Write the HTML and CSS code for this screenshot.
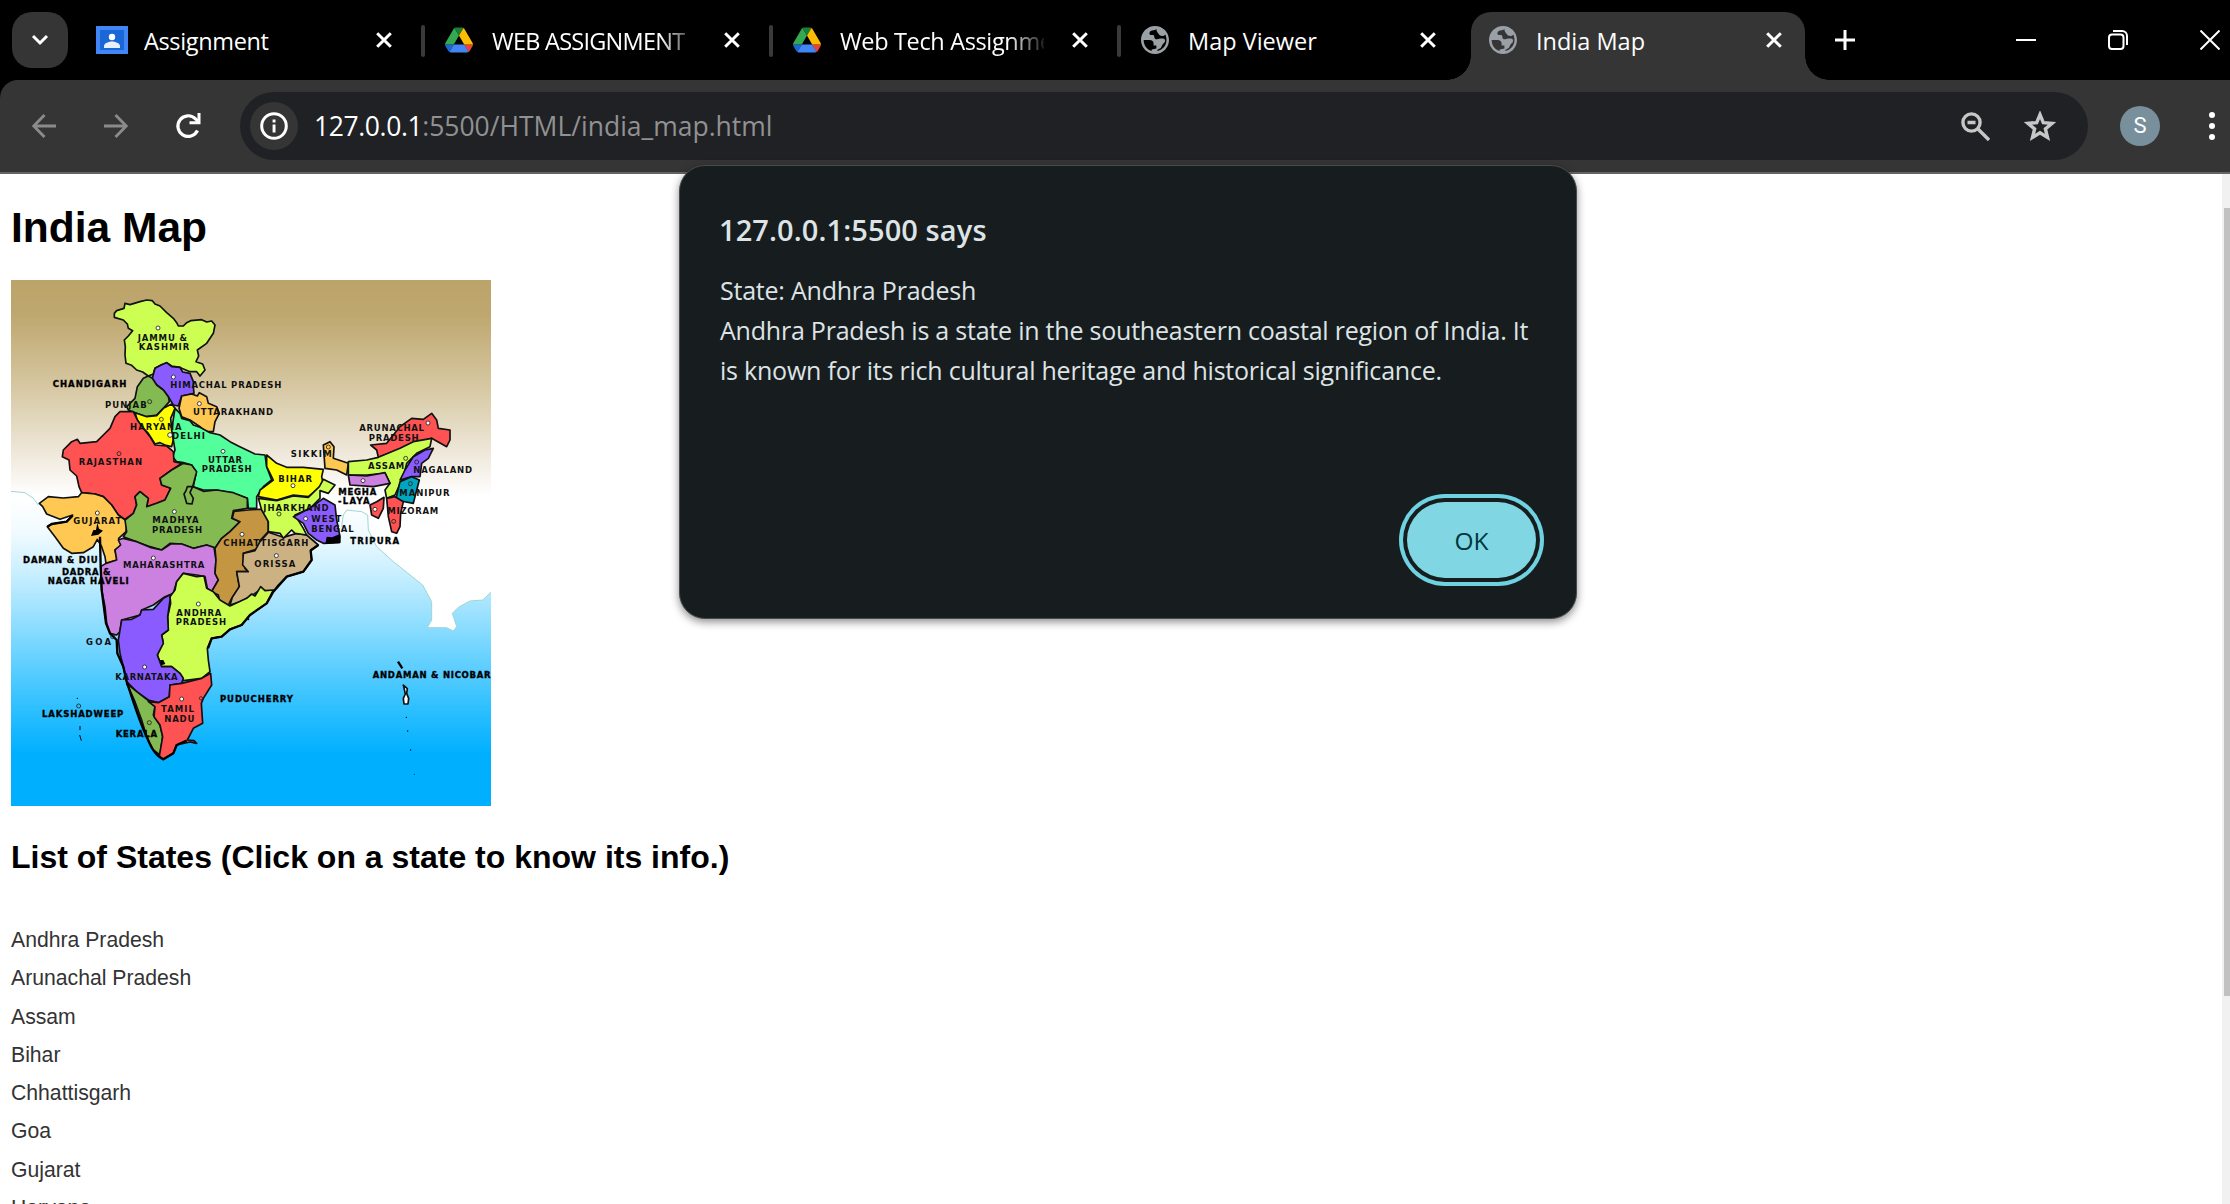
FILE: index.html
```html
<!DOCTYPE html>
<html lang="en">
<head>
<meta charset="utf-8">
<title>India Map</title>
<link rel="stylesheet" href="styles.css">
</head>
<body>
<svg class="defs" width="0" height="0" aria-hidden="true">
  <symbol id="x" viewBox="0 0 16 16"><path d="M1.2 1.2 14.8 14.8M14.8 1.2 1.2 14.8" stroke="currentColor" stroke-width="3" fill="none"/></symbol>
  <symbol id="drive" viewBox="0 0 87.3 78">
    <path fill="#1967d2" d="m6.6 66.85 3.85 6.65c.8 1.4 1.95 2.5 3.3 3.3l13.75-23.8H0c0 1.55.4 3.1 1.2 4.5z"/>
    <path fill="#34a853" d="M43.65 25 29.9 1.2c-1.35.8-2.5 1.9-3.3 3.3L1.2 48.5A9 9 0 0 0 0 53h27.5z"/>
    <path fill="#ea4335" d="M73.55 76.8c1.35-.8 2.5-1.9 3.3-3.3l1.6-2.75L86.1 57.500c.8-1.4 1.200-2.950 1.200-4.500H59.800l5.850 11.500z"/>
    <path fill="#188038" d="M43.65 25 57.400 1.200C56.050.4 54.500 0 52.900 0H34.400c-1.600 0-3.150.450-4.500 1.200z"/>
    <path fill="#4285f4" d="M59.800 53H27.500L13.750 76.800c1.350.8 2.900 1.200 4.500 1.200h50.800c1.600 0 3.150-.450 4.500-1.200z"/>
    <path fill="#fbbc04" d="M73.400 26.500 60.700 4.500c-.8-1.400-1.950-2.500-3.300-3.300L43.650 25l16.150 28h27.450c0-1.550-.4-3.100-1.200-4.500z"/>
  </symbol>
  <symbol id="globe" viewBox="2 2 20 20"><path fill="#9aa0a6" d="M12 2C6.480 2 2 6.480 2 12s4.480 10 10 10 10-4.480 10-10S17.520 2 12 2zM3.900 12h4.200c1.900 0 2.900 1 2.900 2.600v1.400h2v2.100l-3.400.6v1.100C6.200 19 3.900 15.800 3.900 12zm9.600 7.900c0-.9.900-1.500 2-1.900 1-.4 1.200-1.500 1.700-2.500.7-1.200 2-1.400 2-3.100 0-1.300-1.200-1.400-2.200-1.400-1.600 0-2.500.5-3.500.5-1.200 0-2-.7-2-1.700 0-1.500-1-1.300-2-1.300-.9 0-1.500-.4-1.500-1.300C8 5.800 9.500 5 11 5c1 0 2-.4 2-1.200-.2 2 .8 2.700 1.500 3.700.6 1 1.500 1.600 2.600 1.600 1.200 0 2-.6 2.300-1.100.5 1.100.8 2.600.8 4 0 3.900-2.800 7.200-6.700 7.900z"/></symbol>
</svg>

<header class="tabstrip">
  <button class="tab-search"><svg width="18" height="12" viewBox="0 0 18 12"><path d="M2 2l7 7 7-7" fill="none" stroke="#fff" stroke-width="3"/></svg></button>
  <div class="tab">
    <svg class="fav room" viewBox="0 0 32 28"><path fill="#4285f4" d="M0 0h32v28H0z"/><path fill="#1a67d8" d="M4 4h24v20H4z"/><circle cx="16" cy="11" r="3.200" fill="#fff"/><path fill="#e8f0fe" d="M8 22v-2c0-3 5-4.500 8-4.500s8 1.500 8 4.500v2z"/></svg>
    <span class="tab-title tight">Assignment</span><svg class="close"><use href="#x"/></svg>
  </div>
  <div class="tab sep">
    <svg class="fav"><use href="#drive"/></svg>
    <span class="tab-title fade caps">WEB ASSIGNMENT</span><svg class="close"><use href="#x"/></svg>
  </div>
  <div class="tab sep">
    <svg class="fav"><use href="#drive"/></svg>
    <span class="tab-title fade tight">Web Tech Assignment</span><svg class="close"><use href="#x"/></svg>
  </div>
  <div class="tab sep">
    <svg class="fav"><use href="#globe"/></svg>
    <span class="tab-title">Map Viewer</span><svg class="close"><use href="#x"/></svg>
  </div>
  <div class="tab active">
    <svg class="fav"><use href="#globe"/></svg>
    <span class="tab-title">India Map</span><svg class="close"><use href="#x"/></svg>
  </div>
  <svg class="plus" width="20" height="20" viewBox="0 0 20 20"><path d="M10 0v20M0 10h20" stroke="#fff" stroke-width="3"/></svg>
  <div class="window-buttons">
    <svg width="20" height="20" viewBox="0 0 20 20"><path d="M0 10h20" stroke="#fff" stroke-width="2"/></svg>
    <svg width="20" height="20" viewBox="0 0 20 20" fill="none" stroke="#fff" stroke-width="2"><rect x="1" y="4.500" width="14.500" height="14.500" rx="3"/><path d="M5 1h9a5 5 0 0 1 5 5v9"/></svg>
    <svg width="20" height="20" viewBox="0 0 20 20"><path d="M.5.5l19 19M19.500.5l-19 19" stroke="#fff" stroke-width="2"/></svg>
  </div>
</header>

<nav class="toolbar">
  <svg class="nav" viewBox="0 0 24 24" fill="none" stroke="#8b8b8b" stroke-width="2.800"><path d="M24 12H2M12.500 1 1.800 12l10.700 11"/></svg>
  <svg class="nav" viewBox="0 0 24 24" fill="none" stroke="#8b8b8b" stroke-width="2.800"><path d="M0 12h22M11.500 1l10.700 11-10.700 11"/></svg>
  <svg class="nav reload" viewBox="0 0 26 26"><path d="M22.500 17.500A10.300 10.300 0 1 1 20.500 5.800l3 3" fill="none" stroke="#fff" stroke-width="3.200"/><path d="M25.500 0v11.200H14.500V8.200h8V0z" fill="#fff"/></svg>
  <div class="omnibox">
    <span class="info"><svg width="28" height="28" viewBox="0 0 28 28"><circle cx="14" cy="14" r="12.300" fill="none" stroke="#fff" stroke-width="3"/><path d="M12.600 12.500h2.900v8h-2.900zM12.600 7.500h2.900v3h-2.900z" fill="#fff"/></svg></span>
    <span class="url"><b>127.0.0.1</b>:5500/HTML/india_map.html</span>
    <svg class="lens" width="29" height="29" viewBox="0 0 29 29" fill="none" stroke="#c7c7c7" stroke-width="3.400"><circle cx="10.500" cy="10.500" r="8.600"/><path d="M17 17l11 11M6.500 10.500h8"/></svg>
    <svg class="star" width="32" height="31" viewBox="0 0 32 31"><path d="M16 3.600l3.300 8 8.800.7-6.700 5.600 2.100 8.500-7.500-4.600-7.500 4.600 2.100-8.500-6.700-5.600 8.800-.7z" fill="none" stroke="#c7c7c7" stroke-width="3.400"/></svg>
  </div>
  <span class="avatar">S</span>
  <svg class="dots" width="8" height="28" viewBox="0 0 8 28" fill="#fff"><circle cx="4" cy="3" r="3"/><circle cx="4" cy="14" r="3"/><circle cx="4" cy="25" r="3"/></svg>
</nav>

<div class="viewport">
<main class="page">
  <h1>India Map</h1>
  <svg class="map" viewBox="33 30 1440 1578" preserveAspectRatio="none">
    <defs><linearGradient id="sky" x1="0" y1="0" x2="0" y2="1">
      <stop offset="0" stop-color="#bba369"/><stop offset=".07" stop-color="#bfa870"/><stop offset=".2" stop-color="#d6c7a1"/><stop offset=".34" stop-color="#f1ebdf"/><stop offset=".41" stop-color="#fff"/><stop offset=".48" stop-color="#f1fbff"/><stop offset=".58" stop-color="#bcebff"/><stop offset=".7" stop-color="#73d5ff"/><stop offset=".8" stop-color="#36c2ff"/><stop offset=".9" stop-color="#00b0ff"/><stop offset="1" stop-color="#00b0ff"/>
    </linearGradient></defs>
    <path fill="url(#sky)" d="M33 30h1440v1578H33z"/>
    <path fill="#fff" d="M1475 680V965L1448 990 1410 993 1375 1012 1357 1030 1370 1070 1360 1083 1340 1073 1282 1073 1295 1050V995L1268 945 1180 875 1130 830 1105 780 1103 735 1040 720 1030 735 1020 770V680z"/>
    <path fill="none" stroke="#9fd5d5" stroke-width="3" d="M1475 965 1448 990 1410 993 1375 1012 1357 1030 1370 1070 1360 1083 1340 1073 1282 1073 1295 1050V995L1268 945 1180 875 1130 830 1105 780 1103 735 1085 725 1040 720 1030 735 1025 770"/>
    <path fill="none" stroke="#9fd5d5" stroke-width="3" d="M33 664 75 668 100 685 115 705"/>
    <g class="states">
      <path fill="#ccff52" d="M343 130 350 122 372 115 375 100 390 104 420 95 440 90 457 92 465 102 480 108 500 128 520 145 530 158 535 168 550 168 560 158 572 152 605 149 620 156 635 153 645 165 640 190 620 220 592 240 596 258 588 275 608 282 615 300 600 318 590 305 570 305 545 295 540 292 515 288 500 278 485 284 465 295 460 312 445 318 428 306 410 300 395 286 378 280 375 255 376 230 373 210 385 198 398 182 385 175 382 162 370 150 343 142z"/>
      <path fill="#8a5cff" d="M465 295 485 284 500 278 515 290 540 292 548 306 570 310 580 335 580 350 582 370 545 378 535 408 520 405 505 380 490 360 470 345 457 325z"/>
      <path fill="#84ba52" d="M445 318 457 325 470 345 490 360 505 380 508 395 490 415 470 435 440 440 405 428 385 420 380 410 405 385 412 350 430 325z"/>
      <path fill="#ffc852" d="M545 378 575 372 592 378 598 368 620 380 625 400 650 410 658 430 645 455 640 485 615 485 600 470 570 450 545 440 537 415z"/>
      <path fill="#ffff00" d="M405 428 440 440 470 437 490 415 515 402 525 415 512 445 515 480 522 500 515 530 495 525 480 518 465 522 445 490 425 470 412 450z"/>
      <path fill="#52ff9a" d="M525 415 540 430 545 445 570 452 580 465 600 472 630 488 660 495 690 515 715 528 740 540 765 552 795 555 800 590 815 630 790 650 770 680V715H745L742 685 700 670 650 660 610 660 580 650 588 610 575 585 550 578 530 575 518 560 525 540 520 510 515 480z"/>
      <path fill="#ff5252" d="M360 425 400 425 412 450 430 475 450 500 465 525 500 528 520 545 522 575 545 580 515 600 480 625 485 645 512 655 495 690 470 700 440 710 445 685 420 665 405 680 410 705 400 730 375 748 355 735 335 705 310 680 285 672 245 668 237 650 230 618 210 600 207 570 187 560 190 540 215 515 232 508 240 520 290 515 310 495 330 475 345 440z"/>
      <path fill="#ffc852" d="M118 700 145 680 190 684 235 680 245 668 285 672 310 680 335 705 355 735 382 755 378 785 356 805 365 825 345 840 352 870 318 880 315 860 305 830 292 808 280 830 250 848 215 850 190 835 165 800 142 770 155 762 200 755 218 735 180 748 140 732 128 710z"/>
      <path fill="#84ba52" d="M480 625 515 600 550 580 575 585 590 605 578 650 590 655 610 664 650 660 700 668 742 685 742 715 700 722 695 745 720 755 690 785 665 805 645 835 620 825 580 835 545 822 510 820 485 840 450 830 410 815 370 800 380 785 375 750 400 730 410 705 405 680 420 665 445 685 440 710 470 700 495 690 512 655 485 645z"/>
      <path fill="#84ba52" d="M578 650 562 650 558 662 552 672 560 700 576 702 580 685 570 668z"/>
      <path fill="#cc80e0" d="M370 805 410 815 450 832 485 840 512 822 545 822 580 835 620 825 642 832 648 870 645 910 655 930 635 965 622 955 615 920 590 915 550 910 530 935 520 970 495 980 460 1005 425 1020 420 1035 365 1050 360 1085 350 1095 330 1090 320 1060 315 1010 305 960 302 890 318 880 350 870 345 840 362 825 355 810z"/>
      <path fill="#c49642" d="M645 835 665 805 690 785 720 755 697 745 702 724 745 720 770 718 785 718 805 755 805 785 780 812 778 835 730 850 735 895 745 905 710 905 718 950 695 985 685 1005 660 1000 655 975 635 965 655 930 645 910 648 870z"/>
      <path fill="#ccb282" d="M805 787 850 802 890 790 920 795 955 825 932 840 935 870 910 905 860 920 835 945 820 965 780 960 750 980 720 995 690 1005 697 982 718 950 710 905 745 905 728 885 730 850 765 842 780 815z"/>
      <path fill="#ccff52" d="M550 910 590 920 612 918 620 955 640 965 660 990 690 1008 740 985 755 972 765 978 782 950 795 962 820 960 800 1000 750 1035 725 1065 690 1078 665 1100 635 1105 622 1135 625 1170 630 1205 605 1225 550 1232 540 1210 515 1190 485 1190 472 1155 475 1130 490 1120 485 1095 505 1080 503 1040 512 1000 510 980 525 960 530 935z"/>
      <path fill="#8a5cff" d="M510 975 510 990 503 1040 505 1080 485 1095 490 1120 472 1155 485 1190 515 1190 540 1210 550 1225 545 1240 510 1245 508 1280 475 1298 445 1290 410 1265 380 1235 370 1190 360 1150 355 1110 365 1050 395 1048 420 1035 425 1020 460 1018 490 985z"/>
      <path fill="#84ba52" d="M380 1240 410 1265 445 1292 465 1310 460 1335 480 1365 488 1400 480 1455 460 1440 440 1400 425 1350 405 1295z"/>
      <path fill="#ff5252" d="M510 1245 545 1240 605 1225 632 1210 635 1245 610 1285 604 1300 608 1360 580 1375 562 1410 582 1412 590 1420 570 1416 530 1425 520 1450 490 1468 478 1458 488 1400 480 1365 462 1340 465 1310 445 1295 475 1298 508 1280z"/>
      <path fill="#ffff00" d="M800 555 830 580 860 592 910 592 970 598 965 620 970 645 950 660 925 680 880 675 830 690 775 680 780 660 820 630 800 590z"/>
      <path fill="#ccff52" d="M775 685 830 692 880 678 925 682 958 650 970 628 1005 645 985 670 960 662 960 685 930 715 885 735 910 775 920 795 885 790 875 780 850 805 840 790 805 785V755L785 720z"/>
      <path fill="#8a5cff" d="M970 685 1005 705 1010 750 1020 800 1018 818 970 820 950 810 925 790 910 760 880 740 930 715z"/>
      <path fill="#ffc852" d="M970 525 990 515 1002 530 1000 565 1045 580 1040 615 1010 600 975 595z"/>
      <g transform="translate(720 330)">
        <path fill="#ff5252" d="M392 195 440 190 480 140 515 115 550 118 575 100 590 120 595 145 630 150 630 180 620 200 575 175 520 190 480 208 415 232 410 210z"/>
        <path fill="#ccff52" d="M325 245 380 240 415 232 480 205 520 185 575 175 570 200 530 220 500 250 490 290 465 345 440 355 435 330 450 310 435 280 380 285 325 285z"/>
        <path fill="#cc80e0" d="M325 285 380 288 435 278 450 310 400 320 330 315z"/>
        <path fill="#8a5cff" d="M555 210 580 205 565 235 545 250 540 290 515 290 480 300 495 270 520 230z"/>
        <path fill="#00a6c0" d="M480 305 515 290 538 300 525 350 520 370 467 360z"/>
        <path fill="#ff5252" d="M440 355 465 350 490 365 482 400 480 440 470 460 455 455 445 410zM390 375 410 365 432 352 430 385 415 415 395 405z"/>
      </g>
      <path fill="#fff" d="M1210 1245 1222 1256 1220 1270 1226 1285 1224 1302H1212L1210 1285 1216 1272z"/>
    </g>
    <g class="coast">
      <path d="M380 1235C405 1310 420 1360 440 1400 455 1440 470 1460 490 1468L520 1450 530 1425 560 1412"/>
      <path d="M300 800 302 890 305 960 318 1060 330 1090 350 1110 352 1150 370 1190 380 1235"/>
      <path d="M955 825 932 842 935 870 910 905 860 920 820 965 800 1000 750 1035 725 1065 690 1078 665 1100 635 1105 624 1135"/>
      <path d="M142 770 155 762 200 755 218 737"/>
      <path d="M1194 1175 1207 1195"/><path class="thin" d="M240 1368V1380M239 1395 244 1412"/>
    </g>
    <path d="M280 780h8l4-22 5 18 12 6-14 12-22 4zM480 1170h10l6 12-12 4zM980 800l16 2 24-10 2 26-46 4z"/>
    <g class="specks"><circle cx="1219" cy="1342" r="2"/><circle cx="1223" cy="1383" r="2"/><circle cx="1232" cy="1440" r="2"/><circle cx="1243" cy="1513" r="1.500"/><circle cx="745" cy="1048" r="3"/><circle cx="232" cy="1285" r="2"/></g>
    <g class="pins">
      <circle cx="474" cy="174" r="6"/><circle cx="520" cy="321" r="6"/><circle cx="598" cy="401" r="6"/><circle cx="510" cy="495" r="7"/><circle cx="669" cy="544" r="6"/><circle cx="292" cy="729" r="6"/><circle cx="523" cy="725" r="6"/><circle cx="726" cy="793" r="6"/><circle cx="460" cy="864" r="6"/><circle cx="595" cy="1002" r="6"/><circle cx="434" cy="1191" r="6"/><circle cx="545" cy="1287" r="6"/><circle cx="879" cy="647" r="6"/><circle cx="917" cy="746" r="6"/><circle cx="829" cy="857" r="6"/><circle cx="1089" cy="632" r="6"/><circle cx="1284" cy="459" r="6"/><circle cx="1125" cy="718" r="6"/>
      <g fill="none"><circle cx="449" cy="395" r="6"/><circle cx="484" cy="448" r="6"/><circle cx="357" cy="551" r="6"/><circle cx="837" cy="732" r="6"/><circle cx="985" cy="531" r="6"/><circle cx="1217" cy="565" r="6"/><circle cx="1250" cy="576" r="6"/><circle cx="1231" cy="641" r="6"/><circle cx="1181" cy="754" r="6"/><circle cx="603" cy="1285" r="5"/><circle cx="448" cy="1358" r="6"/><circle cx="236" cy="1308" r="6"/><circle cx="338" cy="1100" r="6"/></g>
    </g>
    <g class="labels">
      <text x="413" y="213" textLength="148">JAMMU &amp;</text><text x="416" y="241" textLength="152">KASHMIR</text>
      <text class="b" x="158" y="351" textLength="221">CHANDIGARH</text>
      <text x="511" y="354" textLength="333">HIMACHAL PRADESH</text>
      <text x="315" y="415" textLength="125">PUNJAB</text>
      <text x="579" y="436" textLength="240">UTTARAKHAND</text>
      <text x="390" y="479" textLength="155">HARYANA</text>
      <text x="516" y="507" textLength="99">DELHI</text>
      <text x="236" y="586" textLength="190">RAJASTHAN</text>
      <text x="624" y="579" textLength="102">UTTAR</text><text x="605" y="607" textLength="150">PRADESH</text>
      <text x="220" y="763" textLength="144">GUJARAT</text>
      <text x="457" y="760" textLength="139">MADHYA</text><text x="456" y="788" textLength="150">PRADESH</text>
      <text x="872" y="561" textLength="123">SIKKIM</text>
      <text x="835" y="635" textLength="101">BIHAR</text>
      <text x="1078" y="483" textLength="194">ARUNACHAL</text><text x="1106" y="512" textLength="150">PRADESH</text>
      <text x="1104" y="597" textLength="109">ASSAM</text>
      <text x="1240" y="608" textLength="176">NAGALAND</text>
      <text x="1198" y="679" textLength="151">MANIPUR</text>
      <text class="b" x="1015" y="675" textLength="114">MEGHA</text><text class="b" x="1014" y="703" textLength="95">-LAYA</text>
      <text x="1162" y="732" textLength="153">MIZORAM</text>
      <text x="790" y="724" textLength="196">JHARKHAND</text>
      <text x="934" y="757" textLength="90">WEST</text><text x="934" y="785" textLength="127">BENGAL</text>
      <text class="b" x="1051" y="822" textLength="146">TRIPURA</text>
      <text x="670" y="827" textLength="255">CHHATTISGARH</text>
      <text class="b" x="69" y="878" textLength="224">DAMAN &amp; DIU</text>
      <text class="b" x="186" y="914" textLength="145">DADRA &amp;</text><text class="b" x="143" y="942" textLength="243">NAGAR HAVELI</text>
      <text x="369" y="895" textLength="244">MAHARASHTRA</text>
      <text x="763" y="892" textLength="123">ORISSA</text>
      <text x="529" y="1038" textLength="135">ANDHRA</text><text x="527" y="1066" textLength="151">PRADESH</text>
      <text x="258" y="1126" textLength="75">GOA</text>
      <text x="346" y="1230" textLength="187">KARNATAKA</text>
      <text x="483" y="1326" textLength="99">TAMIL</text><text x="493" y="1355" textLength="90">NADU</text>
      <text class="b" x="126" y="1342" textLength="244">LAKSHADWEEP</text>
      <text class="b" x="347" y="1400" textLength="124">KERALA</text>
      <text class="b" x="660" y="1297" textLength="219">PUDUCHERRY</text>
      <text class="b" x="1118" y="1223" textLength="354">ANDAMAN &amp; NICOBAR</text>
    </g>
  </svg>
  <h2>List of States (Click on a state to know its info.)</h2>
  <ul class="states-list">
    <li>Andhra Pradesh</li><li>Arunachal Pradesh</li><li>Assam</li><li>Bihar</li><li>Chhattisgarh</li><li>Goa</li><li>Gujarat</li><li>Haryana</li>
  </ul>
</main>
<div class="scrollbar"><div class="thumb"></div></div>
</div>

<div class="dialog" role="alertdialog">
  <h3>127.0.0.1:5500 says</h3>
  <p>State: Andhra Pradesh<br>Andhra Pradesh is a state in the southeastern coastal region of India. It<br>is known for its rich cultural heritage and historical significance.</p>
  <button class="ok">OK</button>
</div>
</body>
</html>
```
FILE: styles.css
```css
* { box-sizing: border-box; }
body {
  margin: 0;
  width: 2230px;
  height: 1204px;
  overflow: hidden;
  display: flex;
  flex-direction: column;
  background: linear-gradient(#000 160px, #fff 160px);
  font-family: "Open Sans", "Noto Sans", sans-serif;
}
svg { display: block; flex: none; }
button { border: 0; padding: 0; font: inherit; }
.defs { position: absolute; }

/* tab strip */
.tabstrip {
  flex: none;
  height: 80px;
  padding: 12px 0 0 12px;
  display: flex;
  background: #000;
  color: #fff;
}
.tab-search {
  width: 56px;
  height: 56px;
  border-radius: 20px;
  background: #353535;
  display: flex;
  align-items: center;
  justify-content: center;
}
.tab {
  position: relative;
  width: 348px;
  height: 56px;
  padding-left: 20px;
  display: flex;
  align-items: center;
}
.tab-search + .tab { width: 353px; padding-left: 28px; }
.tab.sep { padding-left: 24px; }
.tab.sep::before {
  content: "";
  position: absolute;
  left: 0;
  top: 13px;
  width: 4px;
  height: 32px;
  border-radius: 2px;
  background: #3a3a3a;
}
.fav { width: 28px; height: 28px; margin-right: 19px; }
.fav.room { width: 32px; margin-right: 16px; }
.tab-title {
  width: 204px;
  margin-right: 28px;
  padding-top: 2px;
  white-space: nowrap;
  overflow: hidden;
  font-size: 23.500px;
  line-height: 34px;
}
.tab-title.tight { letter-spacing: -.35px; }
.tab-title.caps { letter-spacing: -.75px; }
.tab-title.fade {
  -webkit-mask-image: linear-gradient(90deg, #000 168px, transparent 208px);
  mask-image: linear-gradient(90deg, #000 168px, transparent 208px);
}
.close { width: 16px; height: 16px; }
.tab.active {
  width: 334px;
  height: 68px;
  margin-left: 6px;
  padding: 0 0 12px 18px;
  background: #353535;
  border-radius: 20px 20px 0 0;
}
.tab.active .tab-title { margin-right: 26px; }
.tab.active::before, .tab.active::after {
  content: "";
  position: absolute;
  bottom: 0;
  width: 24px;
  height: 24px;
}
.tab.active::before { right: 100%; background: radial-gradient(circle at 0 0, transparent 23.500px, #353535 24px); }
.tab.active::after { left: 100%; background: radial-gradient(circle at 100% 0, transparent 23.500px, #353535 24px); }
.plus { margin: 18px 0 0 30px; }
.window-buttons { display: flex; gap: 72px; margin: 18px 10px 0 auto; }

/* toolbar */
.toolbar {
  flex: none;
  height: 94px;
  padding: 0 14px 2px 32px;
  display: flex;
  align-items: center;
  background: linear-gradient(#353535 92px, #646464 92px);
  border-radius: 18px 0 0 0;
}
.nav { width: 24px; height: 24px; margin-right: 48px; }
.nav.reload { width: 26px; height: 26px; margin: 0 39px 0 -1px; }
.omnibox {
  width: 1848px;
  height: 68px;
  padding: 0 32px 0 10px;
  border-radius: 34px;
  background: #202124;
  display: flex;
  align-items: center;
}
.info {
  width: 48px;
  height: 48px;
  border-radius: 50%;
  background: #353535;
  display: flex;
  align-items: center;
  justify-content: center;
}
.url { margin-left: 16px; font-size: 26.500px; color: #909193; white-space: nowrap; letter-spacing: 0; }
.url b { font-weight: 400; color: #fff; letter-spacing: -.4px; }
.lens { margin-left: auto; }
.star { margin-left: 34px; }
.avatar {
  width: 40px;
  height: 40px;
  margin-left: 32px;
  border-radius: 50%;
  background: #78909c;
  color: #fff;
  font: 22px/40px Roboto, sans-serif;
  text-align: center;
}
.dots { margin-left: auto; }

/* page */
.viewport { flex: 1; min-height: 0; display: flex; background: #fff; }
.page { flex: 1; padding: 0 11px; overflow: hidden; font-family: "Liberation Sans", Arial, sans-serif; }
.page h1 { margin: 0; height: 106px; padding-top: 29px; font-size: 42.500px; line-height: 49px; }
.map { width: 480px; height: 526px; overflow: hidden; }
.page h2 { margin: 32px 0 0; font-size: 32px; line-height: 38px; }
.states-list { margin: 45px 0 0; padding: 0; list-style: none; color: #333; font-size: 21.200px; line-height: 38.300px; }
.scrollbar { width: 8px; padding: 34px 0 0 2px; background: #f1f1f1; }
.thumb { height: 788px; background: #c1c1c1; }

/* map drawing */
.states path { stroke: #111; stroke-width: 5; stroke-linejoin: round; }
.coast { fill: none; stroke: #000; stroke-width: 7; stroke-linejoin: round; }
.coast .thin { stroke-width: 3; }
.pins { fill: #fff; stroke: #222; stroke-width: 2.500; }
.labels { font: 700 25.500px "DejaVu Sans", sans-serif; fill: #111; }
.labels .b { fill: #000; stroke: #000; stroke-width: 1; }

/* alert */
.dialog {
  position: absolute;
  left: 679px;
  top: 165px;
  width: 898px;
  height: 454px;
  padding: 44px 32px 32px 40px;
  border: 1px solid #474b4d;
  border-radius: 26px;
  background: #171d1f;
  color: #dee3e5;
  box-shadow: 0 3px 8px rgba(0, 0, 0, .45);
  display: flex;
  flex-direction: column;
  white-space: nowrap;
}
.dialog h3 { margin: 0 0 0 -1px; font-size: 29px; font-weight: 600; line-height: 40px; letter-spacing: .1px; }
.dialog p { margin: 20px 0 0; font-size: 25px; line-height: 40px; letter-spacing: -.22px; }
.ok {
  align-self: flex-end;
  width: 129px;
  height: 76px;
  margin: auto 8px 8px 0;
  border-radius: 38px;
  background: #80d6e3;
  color: #00363d;
  font-size: 24.500px;
  font-weight: 500;
  box-shadow: 0 0 0 4px #171d1f, 0 0 0 8px #6fd2e0;
}
```
